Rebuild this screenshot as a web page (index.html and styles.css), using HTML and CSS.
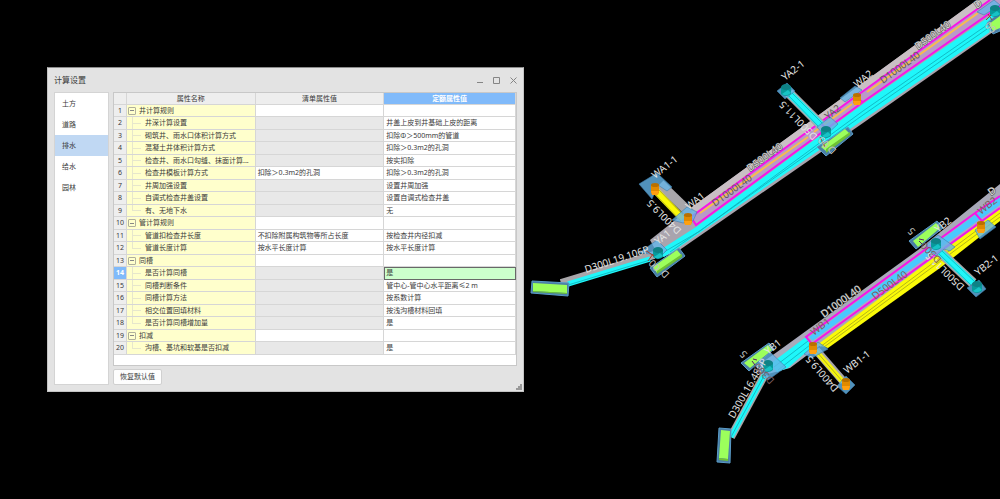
FILE: index.html
```html
<!DOCTYPE html>
<html lang="zh-CN">
<head>
    <meta charset="UTF-8">
    <meta name="viewport" content="width=device-width, initial-scale=1.0">
    <title>计算设置</title>
    <link rel="stylesheet" href="styles.css">
</head>
<body>
    <main class="workspace">
        <svg class="scene" viewBox="0 0 1000 499" preserveAspectRatio="xMidYMid slice" role="img" aria-label="管网模型">
            <defs>
                <g id="well-cyan">
                    <path d="M-5 -3 L-5 4 Q0 8 5 4 L5 -3 Z" fill="#079a9c"/>
                    <ellipse cx="0" cy="-3" rx="5" ry="3" fill="#0e8286"/>
                    <path d="M-4 4 Q0 7 5 3 L2 0 Z" fill="#17c3c6"/>
                </g>
                <g id="well-orange">
                    <path d="M-4 -4 L-4 4 Q0 7 4 4 L4 -4 Z" fill="#e08a00"/>
                    <ellipse cx="0" cy="-4" rx="4" ry="2" fill="#b87000"/>
                    <path d="M-4 2 L4 2 L3 6 L-3 6 Z" fill="#ffa010"/>
                </g>
            </defs>

            <!-- upper run -->
            <polygon points="650,240 688,210 977,0 1000,0 1000,27 863,123 678,251 660,258" fill="#a9a4ae"/>
            <polygon points="688,210 977,0 990,0 691,217" fill="#c9bfc4"/>
            <polygon points="691,217 990,0 1000,0 1000,6 863,102 696,225" fill="#b99ac8"/>
            <polygon points="657,252 696,227 863,104 1000,9 1000,25 863,120 675,250 664,257" fill="#1ff7fa"/>
            <path d="M664 252 L700 231 L863 111 L1000 16 M670 252 L863 115 L1000 20" class="seam seam-cyan"/>
            <path d="M700 213 L808 137 M814 132 L852 104 M867 92 L978 13" class="core"/>
            <path d="M863 102 L696 225 L691 217 L855 97 L863 102 M855 97 L990 0 M863 102 L1000 6 M818 121 L827 129" class="outline"/>

            <!-- lower run -->
            <polygon points="760,364 777,352 918,250 1000,184 1000,210 830,338 790,368 768,374" fill="#a8a9b9"/>
            <polygon points="770,364 806,337 812,347 788,368 777,372" fill="#1ff7fa"/>
            <path d="M774 367 L808 341 M778 370 L810 345" class="seam seam-cyan"/>
            <polygon points="809,337 975,215 1000,197 1000,206 982,218 813,341" fill="#49c9ff"/>
            <polygon points="811,342 936,251 1000,205 1000,209 982,221 812,344" fill="#b5a3c5"/>
            <polygon points="817,345 936,256 1000,209 1000,221 940,268 828,348" fill="#fafa08"/>
            <path d="M820 347 L937 260 L1000 213 M824 347 L938 263 L1000 217" class="seam seam-yellow"/>
            <path d="M812 344 L806 337 L975 213 L982 221 L812 344 M975 213 L1000 196 M982 221 L1000 208" class="outline"/>

            <!-- branches -->
            <path d="M660 184 L690 213" class="branch-shell"/>
            <path d="M656 191 L683 219" class="branch branch-yellow"/>
            <path d="M658 189 L685 217 M654 193 L681 221" class="seam seam-yellow"/>
            <path d="M789 93 L821 125" class="branch-shell"/>
            <path d="M789 93 L821 125" class="branch branch-cyan"/>
            <path d="M788 95 L819 127 M791 92 L823 124" class="seam seam-cyan"/>
            <path d="M561 283 L654 255" class="branch-shell branch-shell-thin"/>
            <path d="M568 284 L650 259" class="branch branch-thin"/>
            <path d="M568 285 L650 260" class="seam seam-cyan"/>
            <path d="M765 374 L731 437" class="branch-shell branch-shell-thin"/>
            <path d="M765 374 L731 437" class="branch branch-thin"/>
            <path d="M765 374 L731 437" class="seam seam-cyan"/>
            <path d="M816 350 L843 381" class="branch-shell branch-shell-thin"/>
            <path d="M816 351 L843 382" class="branch branch-gold"/>
            <path d="M816 351 L843 382" class="seam seam-yellow"/>
            <path d="M940 252 L973 283" class="branch-shell"/>
            <path d="M940 252 L973 283" class="branch branch-cyan"/>
            <path d="M939 254 L971 285 M942 251 L975 282" class="seam seam-cyan"/>

            <!-- well bases -->
            <g class="base">
                <polygon points="639,184 657,173 672,187 667,191 658,185 652,199"/>
                <polygon points="672,220 687,207 697,212 693,221 683,223"/>
                <polygon points="639,253 657,240 667,250 658,259 652,254"/>
                <polygon points="777,91 787,83 795,91 785,99"/>
                <polygon points="840,98 855,86 862,90 845,102"/>
                <polygon points="755,365 770,352 786,367 768,380"/>
                <polygon points="804,354 818,342 828,349 812,358"/>
                <polygon points="837,386 846,376 855,385 846,394"/>
                <polygon points="926,245 938,235 955,247 950,251 944,249 936,256"/>
                <polygon points="967,288 979,280 986,289 976,297"/>
                <polygon points="975,230 988,220 996,227 980,239"/>
                <polygon points="977,12 994,0 1000,5 984,15"/>
                <polygon points="817,127 830,117 838,124 825,136"/>
            </g>

            <!-- gullies -->
            <g class="gully-rim">
                <polygon points="532,281 569,283 568,296 531,293"/>
                <polygon points="650,268 679,248 685,256 657,277"/>
                <polygon points="817,147 848,127 853,134 826,156"/>
                <polygon points="741,363 769,343 774,349 749,371"/>
                <polygon points="909,241 937,221 943,228 916,249"/>
                <polygon points="719,428 731,429 730,463 717,462"/>
                <polygon points="987,23 1000,12 1000,31 993,34"/>
            </g>
            <g class="gully">
                <polygon points="533,283 567,285 567,293 533,291"/>
                <polygon points="653,267 677,250 682,256 657,273"/>
                <polygon points="821,147 845,129 850,134 826,151"/>
                <polygon points="744,363 768,345 772,350 750,368"/>
                <polygon points="913,241 936,223 940,228 918,247"/>
                <polygon points="721,430 730,431 728,459 719,458"/>
                <polygon points="989,24 1000,16 1000,28 993,31"/>
            </g>
            <g class="gully-side">
                <polygon points="533,291 567,293 567,294 533,292"/>
                <polygon points="657,271 682,254 682,257 657,274"/>
                <polygon points="826,149 850,132 850,135 826,153"/>
                <polygon points="719,458 728,459 728,461 719,460"/>
            </g>

            <use href="#well-orange" x="655" y="189"/>
            <use href="#well-orange" x="688" y="219"/>
            <use href="#well-cyan" x="658" y="253"/>
            <use href="#well-cyan" x="786" y="90"/>
            <use href="#well-cyan" x="826" y="132"/>
            <use href="#well-orange" x="857" y="99"/>
            <use href="#well-cyan" x="995" y="11"/>
            <use href="#well-cyan" x="768" y="366"/>
            <use href="#well-orange" x="813" y="348"/>
            <use href="#well-orange" x="846" y="384"/>
            <use href="#well-cyan" x="936" y="244"/>
            <use href="#well-cyan" x="977" y="287"/>
            <use href="#well-orange" x="981" y="227"/>
            <path d="M645 250 L654 256 M648 261 L653 254 M820 137 L825 147 M988 14 L992 20 M986 20 L991 15" stroke="#a33c2c" fill="none"/>

            <!-- labels -->
            <g class="label">
                <text transform="translate(655 179) rotate(-38)">WA1-1</text>
                <text transform="translate(689 210) rotate(-38)">WA1</text>
                <text transform="translate(658 245) rotate(-38)">YA1</text>
                <text transform="translate(785 81) rotate(-38)">YA2-1</text>
                <text transform="translate(857 88) rotate(-38)">WA2</text>
                <text transform="translate(586 273) rotate(-18)">D300L19.106P</text>
                <text transform="translate(734 419) rotate(-60)">D300L16.489P</text>
                <text transform="translate(768 355) rotate(-38)">YB1</text>
                <text transform="translate(847 374) rotate(-38)">WB1-1</text>
                <text transform="translate(978 276) rotate(-38)">YB2-1</text>
                <text transform="translate(938 233) rotate(-38)">YB2</text>
                <text transform="translate(682 230) rotate(-135)">D400L9.5</text>
                <text transform="translate(818 136) rotate(-134)">D500L11.5</text>
                <text transform="translate(839 388) rotate(-131)">D400L9.5</text>
                <text transform="translate(965 286) rotate(-136)">D500L11.5</text>
            </g>
            <g class="label label-edged">
                <text transform="translate(750 172) rotate(-36)">D500L40</text>
                <text transform="translate(918 50) rotate(-36)">D500L40</text>
                <text transform="translate(824 318) rotate(-36)">D1000L40</text>
                <text transform="translate(977 9) rotate(-36)">D</text>
                <text transform="translate(991 196) rotate(-36)">D</text>
            </g>
            <g class="label label-dark">
                <text transform="translate(715 207) rotate(-36)">D1000L40</text>
                <text transform="translate(883 84) rotate(-36)">D1000L40</text>
                <text transform="translate(828 120) rotate(-38)">YA2</text>
            </g>
            <g class="label label-brown">
                <text transform="translate(875 300) rotate(-36)">D500L40</text>
                <text transform="translate(814 336) rotate(-38)">WB1</text>
                <text transform="translate(981 215) rotate(-38)">WB2</text>
            </g>
            <g class="label label-soft">
                <text transform="translate(837 150) rotate(-134)">D</text>
                <text transform="translate(830 144) rotate(-134)">00</text>
                <text transform="translate(670 274) rotate(-134)">D</text>
                <text transform="translate(661 267) rotate(-134)">00</text>
                <text transform="translate(997 29) rotate(-134)">00</text>
                <text transform="translate(748 354) rotate(-134)">5</text>
                <text transform="translate(916 231) rotate(-134)">5</text>
            </g>
            <g class="label label-brown">
                <text transform="translate(775 380) rotate(-134)">D300</text>
                <text transform="translate(942 259) rotate(-134)">D300</text>
            </g>
            <path d="M752 361 L755 365 M757 360 L753 359 M919 241 L922 244 M924 240 L919 239" stroke="#5c1c66" fill="none"/>
        </svg>

        <section class="dialog" role="dialog" aria-labelledby="dialog-title">
            <header class="titlebar">
                <h1 id="dialog-title">计算设置</h1>
                <div class="window-buttons">
                    <button type="button" aria-label="最小化"><svg viewBox="0 0 7 7"><path d="M1 5.500H7"/></svg></button>
                    <button type="button" aria-label="最大化"><svg viewBox="0 0 7 7"><path d="M.5 .5H6.500V6.500H.5Z"/></svg></button>
                    <button type="button" aria-label="关闭"><svg viewBox="0 0 7 7"><path d="M.5 .5L6.500 6.500M6.500 .5L.5 6.500"/></svg></button>
                </div>
            </header>
            <div class="dialog-body">
                <nav class="sidebar">
                    <button type="button">土方</button>
                    <button type="button">道路</button>
                    <button type="button" class="active">排水</button>
                    <button type="button">给水</button>
                    <button type="button">园林</button>
                </nav>
                <div class="content">
                    <div class="grid-wrap">
                        <table class="grid">
                            <colgroup>
                                <col class="col-no">
                                <col class="col-name">
                                <col class="col-list">
                                <col class="col-quota">
                            </colgroup>
                            <thead>
                                <tr><th></th><th>属性名称</th><th>清单属性值</th><th class="current">定额属性值</th></tr>
                            </thead>
                            <tbody>
                                <tr class="group"><th>1</th><td><button type="button" class="toggle" aria-label="折叠"></button>井计算规则</td><td></td><td></td></tr>
                                <tr><th>2</th><td>井深计算设置</td><td class="off"></td><td>井盖上皮到井基础上皮的距离</td></tr>
                                <tr><th>3</th><td>砌筑井、雨水口体积计算方式</td><td class="off"></td><td>扣除Φ＞500mm的管道</td></tr>
                                <tr><th>4</th><td>混凝土井体积计算方式</td><td class="off"></td><td>扣除＞0.3m2的孔洞</td></tr>
                                <tr><th>5</th><td>检查井、雨水口勾缝、抹面计算...</td><td class="off"></td><td>按实扣除</td></tr>
                                <tr><th>6</th><td>检查井模板计算方式</td><td>扣除＞0.3m2的孔洞</td><td>扣除＞0.3m2的孔洞</td></tr>
                                <tr><th>7</th><td>井周加强设置</td><td class="off"></td><td>设置井周加强</td></tr>
                                <tr><th>8</th><td>自调式检查井盖设置</td><td class="off"></td><td>设置自调式检查井盖</td></tr>
                                <tr class="last"><th>9</th><td>有、无地下水</td><td class="off"></td><td>无</td></tr>
                                <tr class="group"><th>10</th><td><button type="button" class="toggle" aria-label="折叠"></button>管计算规则</td><td></td><td></td></tr>
                                <tr><th>11</th><td>管道扣检查井长度</td><td>不扣除附属构筑物等所占长度</td><td>按检查井内径扣减</td></tr>
                                <tr class="last"><th>12</th><td>管道长度计算</td><td>按水平长度计算</td><td>按水平长度计算</td></tr>
                                <tr class="group"><th>13</th><td><button type="button" class="toggle" aria-label="折叠"></button>同槽</td><td></td><td></td></tr>
                                <tr><th class="current">14</th><td>是否计算同槽</td><td class="off"></td><td class="editing">是</td></tr>
                                <tr><th>15</th><td>同槽判断条件</td><td class="off"></td><td>管中心-管中心水平距离≤2 m</td></tr>
                                <tr><th>16</th><td>同槽计算方法</td><td class="off"></td><td>按系数计算</td></tr>
                                <tr><th>17</th><td>相交位置回填材料</td><td class="off"></td><td>按浅沟槽材料回填</td></tr>
                                <tr class="last"><th>18</th><td>是否计算同槽增加量</td><td class="off"></td><td>是</td></tr>
                                <tr class="group"><th>19</th><td><button type="button" class="toggle" aria-label="折叠"></button>扣减</td><td></td><td></td></tr>
                                <tr class="last"><th>20</th><td>沟槽、基坑和软基是否扣减</td><td class="off"></td><td>是</td></tr>
                            </tbody>
                        </table>
                    </div>
                    <button type="button" class="reset">恢复默认值</button>
                </div>
            </div>
            <svg class="grip" viewBox="0 0 6 6"><path d="M4 0h2v2h-2zM2 2h2v2h-2zM4 2h2v2h-2zM0 4h2v2h-2zM2 4h2v2h-2zM4 4h2v2h-2z"/></svg>
        </section>
    </main>
</body>
</html>
```
FILE: styles.css
```css
* {
    box-sizing: border-box;
}
body {
    margin: 0;
    background: #000;
    color: #3a3a3a;
    font-family: "Noto Sans", "Noto Sans CJK SC", sans-serif;
    font-size: 7px;
    line-height: 10px;
}
button {
    margin: 0;
    padding: 0;
    border: 0;
    background: none;
    color: inherit;
    font: inherit;
    cursor: pointer;
}
.workspace {
    position: relative;
    height: 100vh;
    overflow: hidden;
}

/* model view */
.scene {
    display: block;
    width: 100%;
    height: 100%;
}
.outline {
    fill: none;
    stroke: #f814e8;
    stroke-width: 2;
}
.core {
    fill: none;
    stroke: #f8bd4c;
    stroke-width: 2;
}
.seam {
    fill: none;
    stroke-width: 1;
    stroke-opacity: 0.8;
}
.seam-cyan {
    stroke: #10aeb8;
}
.seam-yellow {
    stroke: #a5a51c;
}
.branch-shell {
    fill: none;
    stroke: #a8a6aa;
    stroke-width: 10;
}
.branch-shell-thin {
    stroke-width: 8;
}
.branch {
    fill: none;
    stroke-width: 7;
}
.branch-cyan {
    stroke: #1ff7fa;
}
.branch-thin {
    stroke: #1ff7fa;
    stroke-width: 5;
}
.branch-yellow {
    stroke: #fafa08;
}
.branch-gold {
    stroke: #f4f410;
    stroke-width: 5;
}
.base {
    fill: #65b5e8;
    fill-opacity: 0.8;
    stroke: #3f7fae;
    stroke-opacity: 0.6;
}
.gully-rim {
    fill: #4a7ea5;
    stroke: #5a9cc8;
}
.gully {
    fill: #9cff5c;
}
.gully-side {
    fill: #6fc234;
}
.label {
    fill: #e4e4e4;
    font-size: 10px;
}
.label-soft {
    fill: #c4c4c0;
}
.label-edged {
    fill: #dededa;
    stroke: #4c4c4c;
    stroke-width: 1;
    paint-order: stroke;
}
.label-dark {
    fill: #5c5c58;
}
.label-brown {
    fill: #7c5c5c;
}

/* settings window */
.dialog {
    position: absolute;
    top: 67px;
    left: 47px;
    width: 477px;
    padding: 0 6px 6px;
    border: 1px solid #c4c4c4;
    border-top-color: #8c8c8c;
    background: #e3e3e3;
}
.titlebar {
    display: flex;
    align-items: center;
    justify-content: space-between;
    height: 24px;
}
.titlebar h1 {
    margin: 0;
    font-size: 8px;
    font-weight: 400;
}
.window-buttons {
    display: flex;
    gap: 10px;
}
.window-buttons svg {
    display: block;
    width: 7px;
    height: 7px;
    fill: none;
    stroke: #858585;
}
.dialog-body {
    display: flex;
    gap: 4px;
}
.sidebar {
    display: flex;
    flex-direction: column;
    width: 55px;
    border: 1px solid #d4d4d4;
    background: #fff;
}
.sidebar button {
    height: 21px;
    padding-left: 7px;
    text-align: left;
}
.sidebar .active {
    background: #c0d8f3;
}
.content {
    flex: 1;
    min-width: 0;
}
.grid-wrap {
    padding-bottom: 10px;
    border: 1px solid #c8c8c8;
    background: #fff;
}
.grid {
    width: 100%;
    table-layout: fixed;
    border-collapse: separate;
    border-spacing: 0;
}
.col-no {
    width: 13px;
}
.col-name, .col-list {
    width: 32%;
}
.grid th, .grid td {
    height: 12px;
    padding: 0 0 0 2px;
    border-right: 1px solid #d6d6d6;
    border-bottom: 1px solid #d6d6d6;
    text-align: left;
    font-weight: 400;
    white-space: nowrap;
    overflow: hidden;
}
.grid tbody tr:nth-child(even) > * {
    height: 13px;
}
.grid th {
    padding: 0;
    background: #eee;
    text-align: center;
}
.grid th.current {
    background: #80bafa;
    color: #fff;
    font-weight: 700;
}
.grid td:nth-child(2) {
    padding-left: 18px;
    background: linear-gradient(#e6e6cc, #e6e6cc) 5px 50% / 9px 1px no-repeat,
        linear-gradient(#e6e6cc, #e6e6cc) 5px 0 / 1px 100% no-repeat,
        #ffc;
}
.grid .last td:nth-child(2) {
    background-size: 9px 1px, 1px 50%, auto;
}
.grid .group td:nth-child(2) {
    padding-left: 1px;
    background: #ffc;
}
.grid .off {
    background: #e8e8e8;
}
.grid .editing {
    background: #cfc;
    border-color: #686868;
    box-shadow: inset 1px 1px #686868;
}
.toggle {
    display: inline-block;
    width: 8px;
    height: 8px;
    margin-right: 3px;
    border: 1px solid #b0b09c;
    border-radius: 1px;
    background: linear-gradient(#888, #888) center / 4px 1px no-repeat;
    vertical-align: middle;
}
.reset {
    display: block;
    height: 16px;
    margin-top: 3px;
    padding: 0 6px;
    border: 1px solid #d0d0d0;
    border-radius: 2px;
    background: #fdfdfd;
}
.grip {
    position: absolute;
    right: 1px;
    bottom: 1px;
    width: 6px;
    height: 6px;
    fill: #999;
}
```
